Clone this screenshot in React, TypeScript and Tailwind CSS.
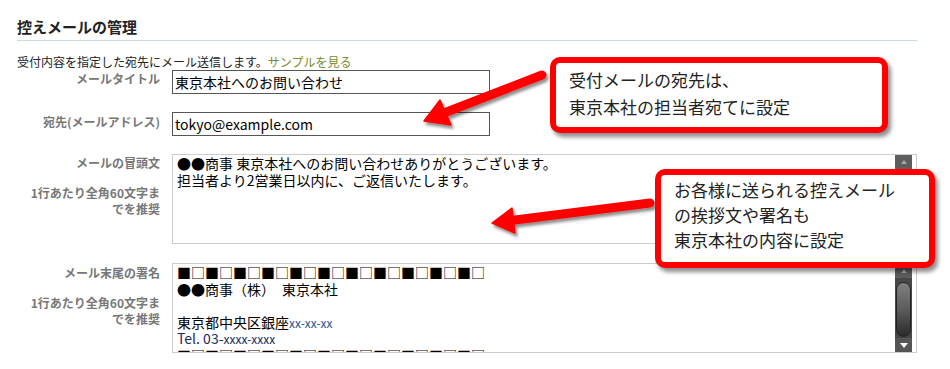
import React from "react";

const font = { fontFamily: '"Noto Sans CJK JP", "Noto Sans", sans-serif' };

function Label({ title, note, pt }: { title: string; note?: boolean; pt: string }) {
  return (
    <div className={`w-[143px] shrink-0 text-right text-[12px] leading-[16px] font-bold text-[#777] ${pt}`}>
      <div>{title}</div>
      {note && (
        <div className="mt-[14px]">
          1行あたり全角60文字ま
          <br />
          でを推奨
        </div>
      )}
    </div>
  );
}

function Scrollbar({ full }: { full?: boolean }) {
  return (
    <div className="w-[17px] shrink-0 h-full bg-[#484848] flex flex-col mr-[4px]">
      <div className="h-[14px] bg-[#5e5e5e] flex items-center justify-center">
        <div className="w-0 h-0 border-l-[3px] border-r-[3px] border-b-[4px] border-l-transparent border-r-transparent border-b-[#a8a8a8]" />
      </div>
      {full && (
        <>
          <div className="mt-[4px] mx-[1px] h-[55px] rounded-full border border-[#222] bg-gradient-to-b from-[#808080] via-[#5c5c5c] to-[#2c2c2c]" />
          <div className="flex-1" />
          <div className="h-[14px] bg-[#555] flex items-center justify-center">
            <div className="w-0 h-0 border-l-[4px] border-r-[4px] border-t-[5px] border-l-transparent border-r-transparent border-t-white" />
          </div>
        </>
      )}
    </div>
  );
}

export default function App() {
  const squares = "■□".repeat(11);
  const line = "h-[16.5px] shrink-0";
  return (
    <div className="relative w-[950px] h-[369px] bg-white overflow-hidden text-[#222]" style={font}>
      <div className="pl-[17px] pt-[17px]">
        <h2 className="text-[15px] leading-[20px] font-bold text-[#222]">控えメールの管理</h2>
        <div className="mt-[3px] h-px w-[900px] bg-[#c9dde6]" />
        <p className="mt-[13px] text-[12px] leading-[16px]">
          受付内容を指定した宛先にメール送信します。
          <span className="text-[#7a8b2b]">サンプルを見る</span>
        </p>

        <div className="flex">
          <Label title="メールタイトル" pt="pt-[1px]" />
          <div className="ml-[12px] w-[318px] h-[24px] border border-[#555] flex items-center pl-[2px] text-[14px] text-black">
            東京本社へのお問い合わせ
          </div>
        </div>

        <div className="flex mt-[18px]">
          <Label title="宛先(メールアドレス)" pt="pt-[2px]" />
          <div className="ml-[12px] w-[318px] h-[24px] border border-[#555] flex items-center pl-[2px] text-[14px] text-black">
            tokyo@example.com
          </div>
        </div>

        <div className="flex mt-[18px]">
          <Label title="メールの冒頭文" note pt="pt-[1px]" />
          <div className="ml-[12px] w-[745px] h-[90px] border border-[#ccc] flex">
            <div className="flex-1 flex flex-col overflow-hidden pl-[4px] text-[14px] leading-[16.5px] text-black whitespace-pre">
              <div className={line}>●●商事 東京本社へのお問い合わせありがとうございます。</div>
              <div className={line}>担当者より2営業日以内に、ご返信いたします。</div>
            </div>
            <Scrollbar />
          </div>
        </div>

        <div className="flex mt-[19px]">
          <Label title="メール末尾の署名" note pt="pt-[2px]" />
          <div className="ml-[12px] w-[745px] h-[90px] border border-[#ccc] flex">
            <div className="flex-1 flex flex-col overflow-hidden pl-[4px] text-[14px] leading-[16.5px] text-black whitespace-pre">
              <div className={line}>{squares}</div>
              <div className={line}>●●商事（株）　東京本社</div>
              <div className={line}>&nbsp;</div>
              <div className={line}>
                東京都中央区銀座<span className="text-[12px] text-[#35508a]">xx-xx-xx</span>
              </div>
              <div className={`${line} text-[#1c2a5a]`}>
                Tel. 03-<span className="text-[12px]">xxxx-xxxx</span>
              </div>
              <div className={line}>{squares}</div>
            </div>
            <Scrollbar full />
          </div>
        </div>
      </div>

      <svg className="absolute inset-0 pointer-events-none" width="950" height="369">
        <defs>
          <filter id="sh" x="-20%" y="-50%" width="140%" height="200%">
            <feDropShadow dx="2" dy="3" stdDeviation="1.6" floodColor="#000" floodOpacity="0.45" />
          </filter>
        </defs>
        <g filter="url(#sh)" fill="#ff0000" stroke="#ff0000">
          <line x1="542" y1="75" x2="444" y2="113" strokeWidth="9" strokeLinecap="round" />
          <polygon points="424,121 451,125 440,100" strokeWidth="1.5" strokeLinejoin="round" />
          <line x1="650" y1="203" x2="511" y2="220.5" strokeWidth="9" strokeLinecap="round" />
          <polygon points="492,223 515,233 512,208" strokeWidth="1.5" strokeLinejoin="round" />
        </g>
      </svg>

      <div className="absolute left-[550px] top-[57px] w-[338px] h-[76px] bg-white border-[6px] border-[#ff0000] rounded-[10px] shadow-[3px_4px_4px_rgba(0,0,0,0.45)] pl-[13px] pt-[3px] text-[17px] leading-[27px] text-[#222]">
        <div>受付メールの宛先は、</div>
        <div>東京本社の担当者宛てに設定</div>
      </div>

      <div className="absolute left-[655px] top-[169px] w-[280px] h-[99px] bg-white border-[6px] border-[#ff0000] rounded-[10px] shadow-[3px_4px_4px_rgba(0,0,0,0.45)] pl-[13px] pt-[2px] text-[17px] leading-[25px] text-[#222] whitespace-nowrap">
        <div>お各様に送られる控えメール</div>
        <div>の挨拶文や署名も</div>
        <div>東京本社の内容に設定</div>
      </div>
    </div>
  );
}
